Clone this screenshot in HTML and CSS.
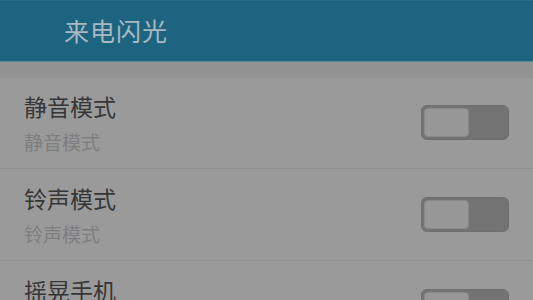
FILE: index.html
```html
<!DOCTYPE html>
<html lang="zh-CN">
<head>
  <meta charset="UTF-8">
  <meta name="viewport" content="width=device-width, initial-scale=1.0">
  <title>来电闪光</title>
  <link rel="stylesheet" href="styles.css">
</head>
<body>
  <header class="app-bar">
    <h1 class="app-title">来电闪光</h1>
  </header>
  <div class="gap-strip"></div>
  <ul class="settings">
    <li class="setting">
      <div class="setting-text">
        <span class="setting-title">静音模式</span>
        <span class="setting-sub">静音模式</span>
      </div>
      <span class="switch"><span class="switch-knob"></span></span>
    </li>
    <li class="setting">
      <div class="setting-text">
        <span class="setting-title">铃声模式</span>
        <span class="setting-sub">铃声模式</span>
      </div>
      <span class="switch"><span class="switch-knob"></span></span>
    </li>
    <li class="setting">
      <div class="setting-text">
        <span class="setting-title">摇晃手机</span>
        <span class="setting-sub">摇晃手机</span>
      </div>
      <span class="switch"><span class="switch-knob"></span></span>
    </li>
  </ul>
</body>
</html>
```

FILE: styles.css
```css
* {
  box-sizing: border-box;
  margin: 0;
  padding: 0;
}

body {
  background: #9a9a9a;
  font-family: "Noto Sans CJK SC", "Noto Sans", sans-serif;
  overflow: hidden;
}

.app-bar {
  display: flex;
  align-items: center;
  height: 62px;
  padding-left: 64px;
  background: #1c6480;
  border-top: 1px solid #2a6d88;
  border-bottom: 1px solid #5e8798;
}

.app-title {
  font-size: 25px;
  font-weight: 400;
  color: #aab8c0;
  letter-spacing: 1px;
  margin-top: -2px;
}

.gap-strip {
  height: 16px;
  background: #929292;
}

.settings {
  list-style: none;
}

.setting {
  display: flex;
  align-items: center;
  justify-content: space-between;
  height: 92px;
  padding: 0 24px;
  border-bottom: 1px solid #8f8f8f;
}

.setting:first-child {
  height: 91px;
}

.setting-text {
  display: flex;
  flex-direction: column;
  gap: 10px;
}

.setting-title {
  font-size: 23px;
  line-height: 27px;
  color: #363636;
}

.setting-sub {
  font-size: 19px;
  line-height: 23px;
  color: #7e7e7e;
}

.switch {
  display: flex;
  width: 88px;
  height: 35px;
  padding: 2px;
  background: #737373;
  border: 1px solid #6f6f6f;
  border-radius: 6px;
  margin-top: -1px;
}

.switch-knob {
  width: 45px;
  height: 100%;
  background: #979797;
  border: 1px solid #888;
  border-radius: 4px;
}
```
